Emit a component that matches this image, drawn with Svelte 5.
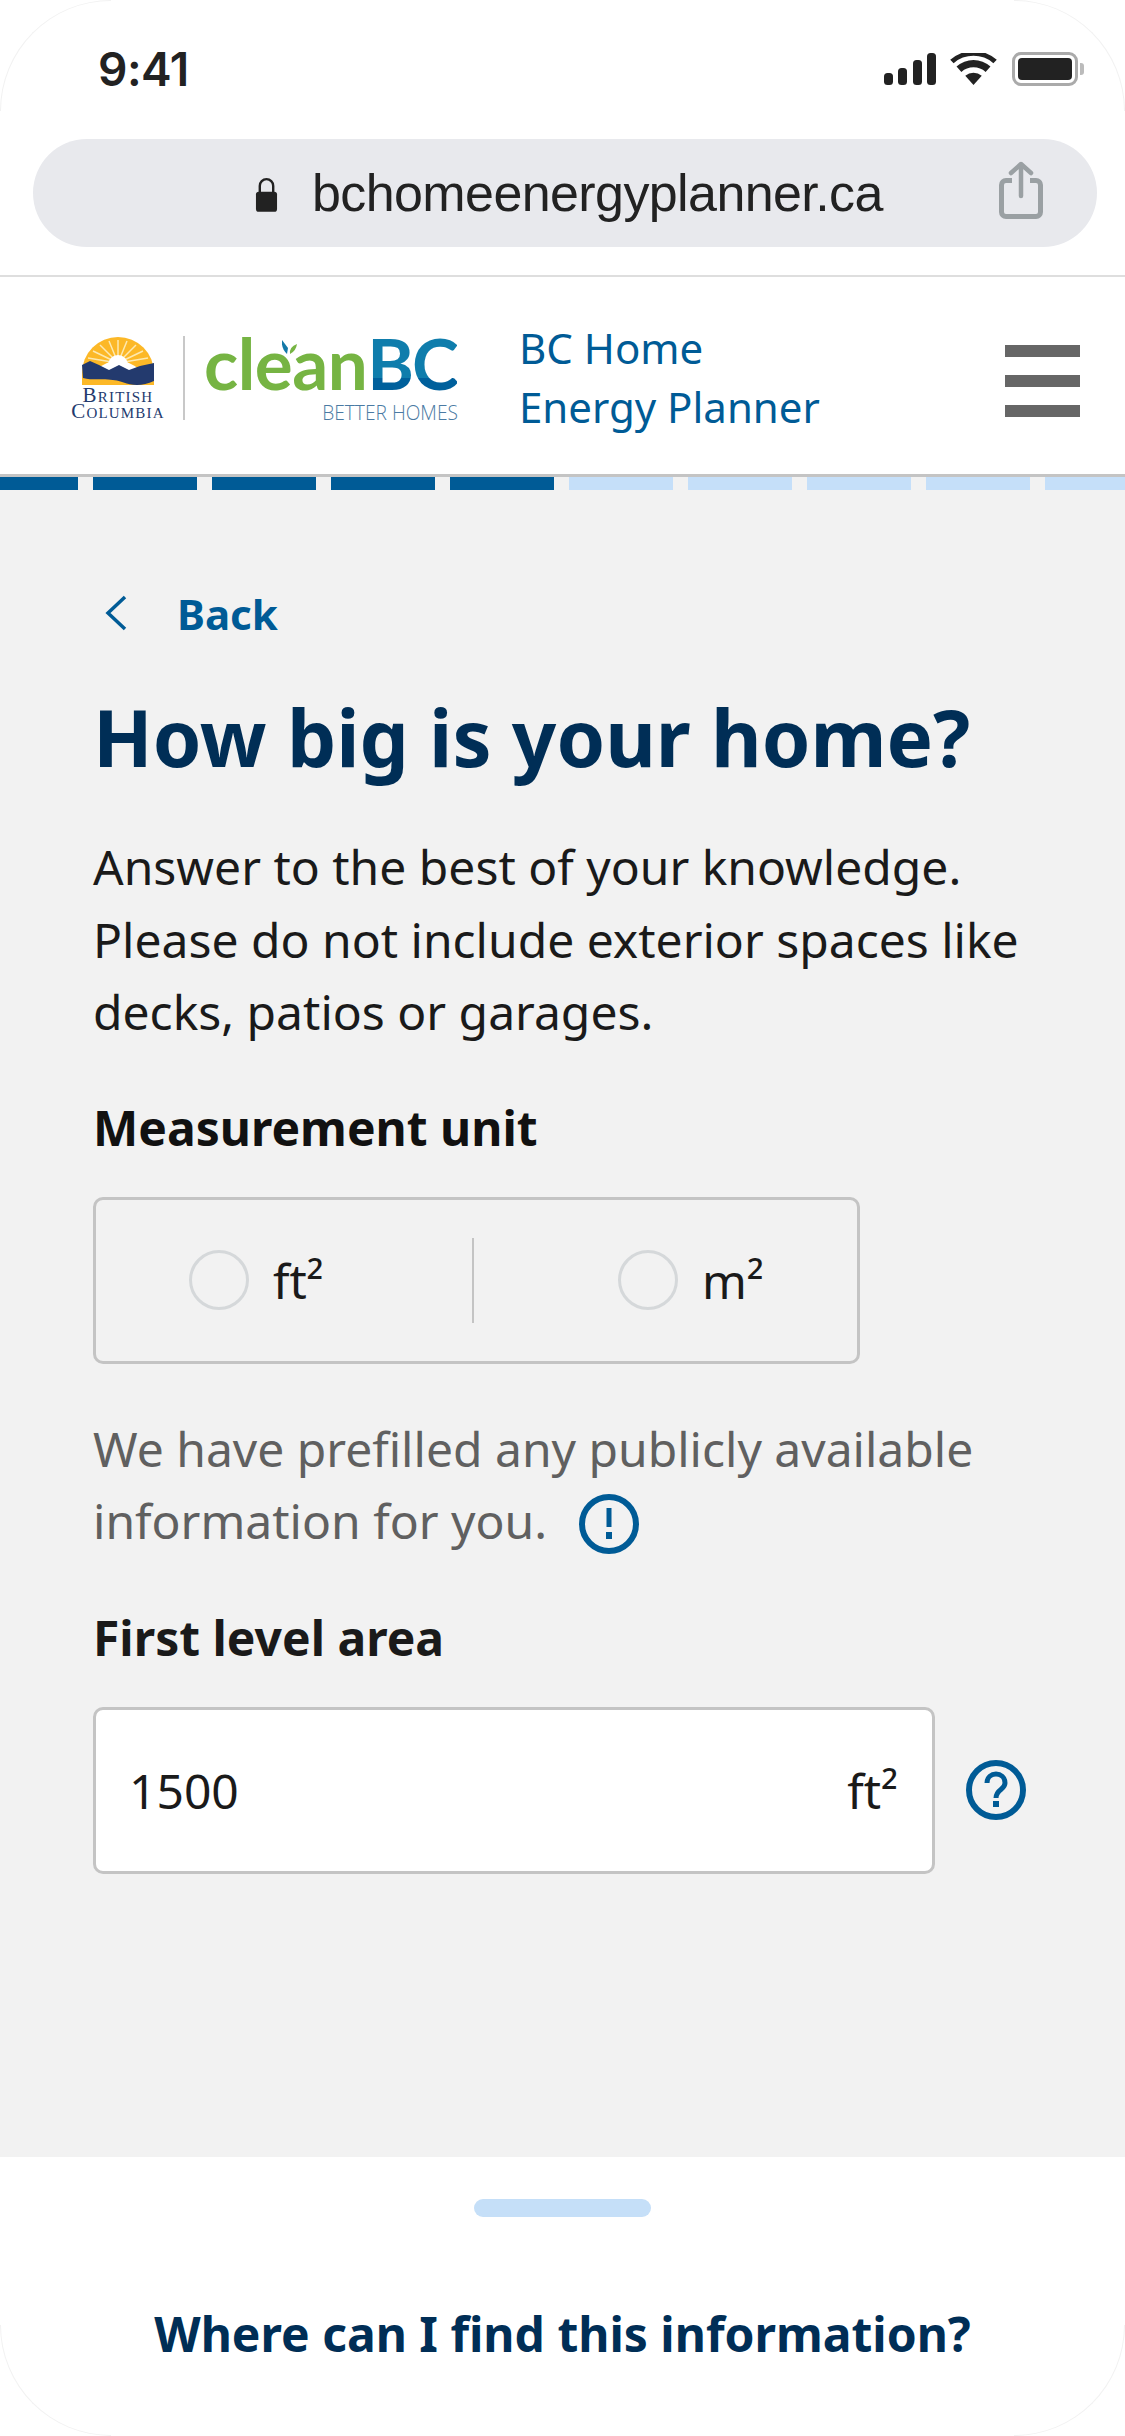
<script>
  const segments = Array.from({ length: 10 }, (_, i) => (i < 5 ? 'done' : 'todo'));
</script>

<div class="screen">
  <header class="chrome">
    <div class="status">
      <span class="time">9:41</span>
      <div class="status-icons">
        <svg width="52" height="32" viewBox="0 0 52 32"><rect x="0" y="20" width="9" height="12" rx="3.500"/><rect x="14" y="15" width="9" height="17" rx="3.500"/><rect x="29" y="7" width="9" height="25" rx="3.500"/><rect x="43" y="0" width="9" height="32" rx="3.500"/></svg>
        <svg width="47" height="32" viewBox="0 0 48 33"><path d="M24 33 L15.500 23.500 A13 13 0 0 1 32.500 23.500 Z"/><path d="M11.500 19.500 L6.500 14 A26 26 0 0 1 41.500 14 L36.500 19.500 A19 19 0 0 0 11.500 19.500 Z"/><path d="M3.500 10.500 L0 7 A36 36 0 0 1 48 7 L44.500 10.500 A31 31 0 0 0 3.500 10.500 Z"/></svg>
        <div class="battery"><i></i></div>
      </div>
    </div>
    <div class="urlbar">
      <svg class="lock" width="23" height="35" viewBox="0 0 24 36"><path d="M5 16 V9 a7 7 0 0 1 14 0 V16" fill="none" stroke="#222" stroke-width="2.500"/><rect x="1" y="15" width="22" height="21" rx="3" fill="#222"/></svg>
      <span class="url">bchomeenergyplanner.ca</span>
      <svg class="share" width="44" height="58" viewBox="0 0 44 58" fill="none" stroke="#9aa0a3" stroke-width="5"><path d="M13 19.500 H7 a4.500 4.500 0 0 0 -4.500 4.500 V51 a4.500 4.500 0 0 0 4.500 4.500 H37 a4.500 4.500 0 0 0 4.500 -4.500 V24 a4.500 4.500 0 0 0 -4.500 -4.500 H31" /><path d="M22 35 V4 M12 12 L22 3 L32 12" stroke-linecap="round" stroke-linejoin="round" stroke-width="4.500"/></svg>
    </div>
  </header>

  <nav class="site">
    <div class="logo">
      <div class="bc">
        <svg width="72" height="48" viewBox="0 0 72 48">
          <defs><clipPath id="dome"><path d="M0 36 A36 36 0 0 1 72 36 V48 H0 Z"/></clipPath></defs>
          <g clip-path="url(#dome)">
            <rect width="72" height="48" fill="#fcb827"/>
            <g stroke="#fde9b0" stroke-width="1.500">
              <path d="M36 26 L36 3 M36 26 L27 4 M36 26 L45 4 M36 26 L18 8 M36 26 L54 8 M36 26 L11 14 M36 26 L61 14 M36 26 L6 21 M36 26 L66 21"/>
            </g>
            <circle cx="36" cy="28" r="10" fill="#fff"/>
            <path d="M14 33 Q36 14 58 33 Z" fill="#fff"/>
          </g>
          <path d="M0 28 L8 24 L17 28 L27 33 L37 28 L47 33 L58 29 L72 26 V44 Q63 48 55 48 C44 48 40 43 26 42.500 C14 42 8 43 1 41 Z" fill="#233a6e"/>
        </svg>
        <span class="bc-name">British<br />Columbia</span>
      </div>
      <div class="rule"></div>
      <div class="clean">
        <div class="word">
          <span class="green">clean</span><span class="blue">BC</span>
          <svg class="leaf" width="16" height="14" viewBox="0 0 16 14"><path d="M0 0 L6 8 L5 14 Q-1 8 0 0Z" fill="#1479a8"/><path d="M15 4 Q14 11 8 14 Q7 7 15 4Z" fill="#76b443"/></svg>
        </div>
        <div class="better">BETTER HOMES</div>
      </div>
    </div>
    <div class="site-title">BC Home<br />Energy Planner</div>
    <div class="burger"><i></i><i></i><i></i></div>
  </nav>

  <div class="progress">
    {#each segments as s}<span class={s}></span>{/each}
  </div>

  <main>
    <div class="back">
      <svg width="24" height="36" viewBox="0 0 24 36" fill="none" stroke="#005b96" stroke-width="3.500"><path d="M21 2 L4 18 L21 34"/></svg>
      <span>Back</span>
    </div>
    <h1>How big is your home?</h1>
    <p class="lead">Answer to the best of your knowledge. Please do not include exterior spaces like decks, patios or garages.</p>
    <div class="label first">Measurement unit</div>
    <div class="radios">
      <div class="opt one"><span class="circle"></span><span>ft²</span></div>
      <div class="sep"></div>
      <div class="opt two"><span class="circle"></span><span>m²</span></div>
    </div>
    <p class="note">We have prefilled any publicly available information for you.<svg class="hint" width="60" height="60" viewBox="0 0 60 60" fill="none"><circle cx="30" cy="30" r="27" stroke="#005b96" stroke-width="6"/><path d="M30 14 V33" stroke="#005b96" stroke-width="5"/><rect x="27" y="38" width="6" height="7" fill="#005b96"/></svg></p>
    <div class="label second">First level area</div>
    <div class="field-row">
      <div class="field"><span>1500</span><span>ft²</span></div>
      <svg width="60" height="60" viewBox="0 0 60 60" fill="none"><circle cx="30" cy="30" r="27" stroke="#005b96" stroke-width="6"/><path d="M21 23 C21 11 39 11 39 23 C39 30 30 29 30 38" stroke="#005b96" stroke-width="5"/><rect x="27" y="41" width="6" height="6" fill="#005b96"/></svg>
    </div>
  </main>

  <section class="sheet">
    <div class="handle"></div>
    <div class="sheet-title">Where can I find this information?</div>
  </section>

  <i class="corner tl"></i><i class="corner tr"></i><i class="corner bl"></i><i class="corner br"></i>
</div>

<style>
  :global(body) { margin: 0; background: #fff; }
  .screen {
    position: relative;
    width: 1125px;
    height: 2436px;
    overflow: hidden;
    display: flex;
    flex-direction: column;
    background: #f2f2f2;
    font-family: "Noto Sans", sans-serif;
    color: #1a1a1a;
  }
  .chrome { background: #fff; height: 275px; border-bottom: 2px solid #dedede; flex: none; }
  .status { display: flex; justify-content: space-between; align-items: center; height: 34px; padding: 52px 47px 0 98px; }
  .time { font-family: Inter, sans-serif; font-weight: 600; font-size: 46px; letter-spacing: -0.5px; color: #222; line-height: 34px; }
  .status-icons { display: flex; align-items: center; gap: 14px; }
  .status-icons svg { fill: #222; }
  .battery { position: relative; width: 66px; height: 34px; box-sizing: border-box; border: 3px solid #aaa; border-radius: 9px; padding: 3px; margin-left: 1px; }
  .battery i { display: block; height: 100%; background: #222; border-radius: 4px; }
  .battery::after { content: ""; position: absolute; right: -9px; top: 8px; width: 4px; height: 12px; background: #bbb; border-radius: 0 3px 3px 0; }
  .urlbar { position: relative; margin: 53px 28px 0 33px; height: 108px; border-radius: 54px; background: #e8e9ed; display: flex; align-items: center; padding-left: 222px; }
  .lock { flex: none; margin-top: 3px; }
  .url { margin-left: 34px; font-family: "Liberation Sans", sans-serif; font-size: 52px; letter-spacing: -0.6px; color: #222; }
  .share { position: absolute; right: 54px; top: 22px; }

  .site { flex: none; height: 200px; box-sizing: border-box; background: #fff; border-bottom: 3px solid #c4c4c4; display: flex; align-items: center; padding: 0 45px 0 70px; }
  .logo { display: flex; align-items: center; height: 84px; margin-top: 5px; }
  .bc { width: 96px; display: flex; flex-direction: column; align-items: center; font-family: "Liberation Serif", serif; color: #233a6e; }
  .bc svg { display: block; }
  .bc-name { font-variant: small-caps; font-size: 21px; line-height: 15.500px; letter-spacing: 1.2px; text-align: center; white-space: nowrap; margin-top: 3px; }
  .rule { width: 2px; height: 84px; background: #c8c8c8; margin: 0 21px 0 17px; flex: none; }
  .clean { width: 252px; }
  .word { position: relative; height: 58px; line-height: 58px; font-family: Lato, sans-serif; font-weight: 700; font-size: 71px; letter-spacing: -0.5px; white-space: nowrap; margin: 0 0 0 -2px; }
  .green { color: #76b443; }
  .blue {
    letter-spacing: -2px;
    background: linear-gradient(#0f7dac 68%, #00609c 68%);
    -webkit-background-clip: text;
    background-clip: text;
    color: transparent;
  }
  .leaf { position: absolute; left: 78px; top: 6px; }
  .better { font-family: "Open Sans", sans-serif; font-weight: 300; font-size: 19.200px; line-height: 20px; color: #4a7aa3; text-align: right; white-space: nowrap; margin-top: 11px; }
  .site-title { margin-left: 61px; font-size: 42px; line-height: 59px; color: #005b96; margin-top: 2px; }
  .burger { margin-left: auto; display: flex; flex-direction: column; gap: 18px; margin-top: 11px; }
  .burger i { display: block; width: 75px; height: 12px; background: #666; }

  .progress { flex: none; height: 13px; display: flex; gap: 15px; margin-left: -26px; overflow: hidden; }
  .progress span { flex: none; width: 104px; }
  .done { background: #005b96; }
  .todo { background: #c5dff9; }

  main { flex: 1; padding: 0 93px; }
  .back { display: flex; align-items: center; gap: 49px; margin: 98px 0 0 11px; height: 50px; color: #005b96; font-weight: 700; font-size: 42px; }
  h1 { margin: 49px 0 0; font-size: 78px; line-height: 100px; font-weight: 700; color: #002e56; white-space: nowrap; }
  .lead { margin: 44px 0 0; font-size: 48px; line-height: 72.500px; width: 950px; }
  .label { font-size: 48px; font-weight: 700; line-height: 62px; }
  .label.first { margin-top: 48px; color: #111; }
  .radios { margin-top: 38px; width: 767px; height: 167px; box-sizing: border-box; border: 3px solid #c4c4c4; border-radius: 10px; display: flex; align-items: center; }
  .opt { display: flex; align-items: center; gap: 24px; font-size: 48px; box-sizing: border-box; }
  .one { flex: none; width: 376px; padding-left: 93px; }
  .two { flex: 1; padding-left: 144px; }
  .circle { width: 60px; height: 60px; box-sizing: border-box; border: 3px solid #d5d8da; border-radius: 50%; flex: none; }
  .sep { width: 2px; height: 85px; background: #c4c4c4; flex: none; }
  .note { margin: 49px 0 0; font-size: 48px; line-height: 72px; color: #606060; width: 950px; }
  .hint { vertical-align: middle; margin-left: 32px; margin-top: -4px; }
  .label.second { margin-top: 50px; }
  .field-row { margin-top: 38px; display: flex; align-items: center; gap: 31px; }
  .field { width: 842px; height: 167px; box-sizing: border-box; border: 3px solid #c4c4c4; border-radius: 10px; background: #fff; display: flex; justify-content: space-between; align-items: center; padding: 0 34px 0 33px; font-size: 48px; }

  .sheet { flex: none; height: 279px; background: #fff; display: flex; flex-direction: column; align-items: center; }
  .handle { margin-top: 42px; width: 177px; height: 18px; border-radius: 9px; background: #c5dff8; }
  .sheet-title { margin-top: 85px; font-size: 48px; line-height: 64px; font-weight: 700; color: #002e56; }

  .corner { position: absolute; width: 111px; height: 111px; box-sizing: border-box; border: 0 solid #f2f2f2; }
  .tl { left: 0; top: 0; border-width: 1px 0 0 1px; border-top-left-radius: 111px; }
  .tr { right: 0; top: 0; border-width: 1px 1px 0 0; border-top-right-radius: 111px; }
  .bl { left: 0; bottom: 0; border-width: 0 0 1px 1px; border-bottom-left-radius: 111px; }
  .br { right: 0; bottom: 0; border-width: 0 1px 1px 0; border-bottom-right-radius: 111px; }
</style>
